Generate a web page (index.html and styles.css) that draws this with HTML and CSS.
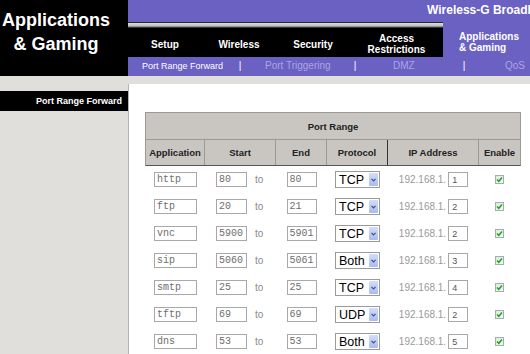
FILE: index.html
```html
<!DOCTYPE html>
<html lang="en">
  <head>
    <meta charset="UTF-8" />
    <meta name="viewport" content="width=device-width, initial-scale=1.0" />
    <title>Applications &amp; Gaming</title>
    <link rel="stylesheet" href="styles.css">
  </head>
  <body>
    <header class="header">
      <div class="brand">Applications<br>&amp; Gaming</div>
      <div class="header-main">
        <div class="topbar">
          <span class="product">Wireless-G Broadband Router</span>
        </div>
        <div class="tabrow">
          <nav class="tabs">
            <a class="tab">Setup</a>
            <a class="tab">Wireless</a>
            <a class="tab">Security</a>
            <a class="tab tab-wide">Access<br>Restrictions</a>
          </nav>
          <div class="tab-active">Applications<br>&amp; Gaming</div>
        </div>
        <div class="subnav">
          <span class="sub-item active">Port Range Forward</span>
          <span class="sep">|</span>
          <span class="sub-item trig">Port Triggering</span>
          <span class="sep">|</span>
          <span class="sub-item dmz">DMZ</span>
          <span class="sep">|</span>
          <span class="sub-item qos">QoS</span>
        </div>
      </div>
    </header>
    <div class="layout">
      <aside class="sidebar">
        <div class="side-title">Port Range Forward</div>
      </aside>
      <main class="content">
        <div class="ports">
          <div class="ports-head">
            <div class="head-title">Port Range</div>
            <div class="head-cell">Application</div>
            <div class="head-cell">Start</div>
            <div class="head-cell">End</div>
            <div class="head-cell head-dark">Protocol</div>
            <div class="head-cell">IP Address</div>
            <div class="head-cell">Enable</div>
          </div>
          <div id="port-rows">
            <!-- rows are generated below -->
          </div>
        </div>
      </main>
    </div>
    <script>
      document.addEventListener("DOMContentLoaded", function () {
        const rowsContainer = document.getElementById("port-rows");

        const rules = [
          { app: "http", start: "80", end: "80", proto: "TCP", ip: "1" },
          { app: "ftp", start: "20", end: "21", proto: "TCP", ip: "2" },
          { app: "vnc", start: "5900", end: "5901", proto: "TCP", ip: "2" },
          { app: "sip", start: "5060", end: "5061", proto: "Both", ip: "3" },
          { app: "smtp", start: "25", end: "25", proto: "TCP", ip: "4" },
          { app: "tftp", start: "69", end: "69", proto: "UDP", ip: "2" },
          { app: "dns", start: "53", end: "53", proto: "Both", ip: "5" },
        ];

        const arrow =
          '<svg width="5" height="4" viewBox="0 0 5 4"><path d="M0.5 0.8 L2.5 2.8 L4.5 0.8" fill="none" stroke="#3d4f80" stroke-width="1.2"/></svg>';
        const tick =
          '<svg width="7" height="7" viewBox="0 0 7 7"><path d="M1 3.5 L2.8 5.3 L6 1.5" fill="none" stroke="#21a31f" stroke-width="1.5"/></svg>';

        rules.forEach((r) => {
          const row = document.createElement("div");
          row.classList.add("port-row");
          row.innerHTML =
            '<div class="cell"><input class="field field-app" value="' + r.app + '"></div>' +
            '<div class="cell cell-start"><input class="field field-port" value="' + r.start + '"><span class="to">to</span></div>' +
            '<div class="cell"><input class="field field-end" value="' + r.end + '"></div>' +
            '<div class="cell"><span class="select"><span class="select-text">' + r.proto + '</span><span class="select-btn">' + arrow + '</span></span></div>' +
            '<div class="cell"><span class="ip">192.168.1.</span><input class="field field-ip" value="' + r.ip + '"></div>' +
            '<div class="cell"><span class="check">' + tick + '</span></div>';
          rowsContainer.appendChild(row);
        });
      });
    </script>
  </body>
</html>
```

FILE: styles.css
```css
* {
  margin: 0;
  padding: 0;
  box-sizing: border-box;
}
html,
body {
  width: 530px;
  height: 354px;
  overflow: hidden;
}
body {
  font-family: "Liberation Sans", Arial, sans-serif;
  background: #e0dfdb;
}
.header {
  display: flex;
  height: 76px;
}
.brand {
  width: 128px;
  background: #000;
  color: #fff;
  font-size: 18px;
  font-weight: bold;
  line-height: 24px;
  text-align: center;
  padding: 8px 16px 0 0;
  white-space: nowrap;
}
.header-main {
  flex: 1;
  display: flex;
  flex-direction: column;
  overflow: hidden;
}
.topbar {
  height: 22px;
  background: #6a61c3;
  padding-left: 299px;
  color: #fff;
  font-size: 12px;
  font-weight: bold;
  line-height: 21px;
  white-space: nowrap;
}
.tabrow {
  display: flex;
  height: 35px;
}
.tabs {
  width: 315px;
  display: flex;
  background: linear-gradient(#2a2a2a 0, #2a2a2a 1px, #dddddd 1px, #bdbdbd 4px, #6b6b6b 5px, #000 6px, #000 100%);
  padding-top: 9px;
}
.tab {
  width: 74px;
  display: flex;
  align-items: center;
  justify-content: center;
  color: #fff;
  font-size: 10px;
  font-weight: bold;
  line-height: 11px;
  text-align: center;
  text-decoration: none;
}
.tab-wide {
  width: 93px;
}
.tab-active {
  flex: 1;
  background: #6a61c3;
  color: #fff;
  font-size: 10px;
  font-weight: bold;
  line-height: 11px;
  padding: 9px 0 0 16px;
  white-space: nowrap;
}
.subnav {
  height: 19px;
  background: #6a61c3;
  display: grid;
  grid-template-columns: 107px 10px 105px 10px 99px 10px 1fr;
  align-items: center;
  font-size: 10px;
  color: #aaa4e4;
  white-space: nowrap;
  padding-bottom: 2px;
}
.sub-item.active {
  color: #fff;
  font-size: 9px;
  padding-left: 14px;
}
.sub-item.trig {
  padding-left: 20px;
}
.sub-item.dmz {
  padding-left: 33px;
}
.sub-item.qos {
  padding-left: 36px;
}
.sep {
  color: #fff;
  text-align: center;
}
.layout {
  display: flex;
  height: 278px;
}
.sidebar {
  width: 128px;
  padding-top: 15px;
}
.side-title {
  height: 20px;
  background: #000;
  color: #fff;
  font-size: 9px;
  font-weight: bold;
  line-height: 20px;
  text-align: right;
  padding-right: 6px;
  white-space: nowrap;
}
.content {
  flex: 1;
  margin-top: 8px;
  background: #fff;
  border-left: 1px solid #b3b3b3;
  padding: 28px 0 0 16px;
}
.ports {
  width: 376px;
}
.ports-head {
  display: grid;
  grid-template-columns: 59px 71px 51px 61px 91px 41px;
  background: #c9c5c0;
  border: 1px solid #9c9894;
  border-bottom-color: #555;
  color: #222;
  font-size: 9.5px;
  font-weight: bold;
}
.head-title {
  grid-column: 1 / -1;
  height: 27px;
  line-height: 27px;
  text-align: center;
  border-bottom: 1px solid #9c9894;
}
.head-cell {
  height: 25px;
  line-height: 25px;
  text-align: center;
  border-right: 1px solid #9c9894;
}
.head-cell:last-child {
  border-right: none;
}
.head-cell.head-dark {
  border-right-color: #333;
}
.port-row {
  display: grid;
  grid-template-columns: 59px 71px 51px 61px 91px 41px;
  height: 27px;
  padding-left: 1px;
  align-items: center;
}
.cell {
  display: flex;
  align-items: center;
  justify-content: center;
}
.cell-start {
  justify-content: flex-start;
  padding-left: 11px;
}
.field {
  height: 15px;
  border: 1px solid #a8a8a8;
  background: #fff;
  font-family: "Liberation Mono", "Courier New", monospace;
  font-size: 10px;
  color: #6e6e6e;
  padding: 0 0 0 2px;
  outline: none;
}
.field-app {
  width: 43px;
}
.field-port {
  width: 31px;
}
.field-end {
  width: 30px;
}
.field-ip {
  width: 20px;
  margin-left: 2px;
  font-family: "Liberation Sans", Arial, sans-serif;
  font-size: 9px;
  color: #555;
  padding-left: 3px;
}
.to {
  margin-left: 8px;
  font-size: 10px;
  color: #8a8a8a;
}
.select {
  width: 45px;
  height: 17px;
  border: 1px solid #9a9a9a;
  background: #fff;
  display: flex;
  align-items: center;
  justify-content: space-between;
  padding: 1px;
}
.select-text {
  font-size: 12.5px;
  color: #000;
  padding-left: 2px;
  line-height: 14px;
}
.select-btn {
  width: 9px;
  height: 13px;
  background: linear-gradient(#d3ddfb, #a9baf0);
  border-radius: 1px;
  display: flex;
  align-items: center;
  justify-content: center;
}
.ip {
  font-size: 10px;
  color: #999;
}
.check {
  width: 9px;
  height: 9px;
  border: 1px solid #a3aeb0;
  background: linear-gradient(135deg, #dfe7df, #f5f8f5);
  display: flex;
  align-items: center;
  justify-content: center;
}
```
